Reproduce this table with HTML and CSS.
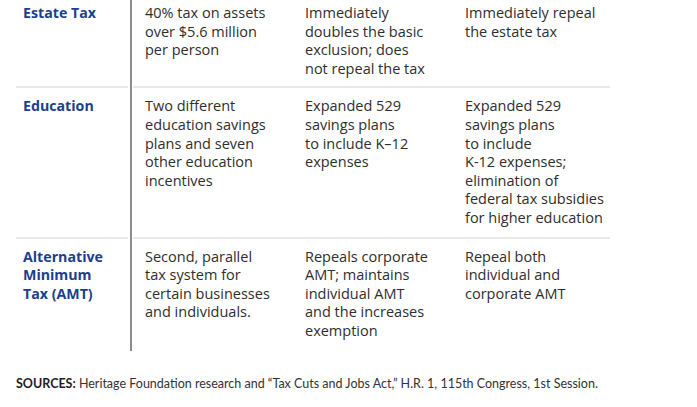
FILE: index.html
```html
<!DOCTYPE html>
<html>
<head>
<meta charset="utf-8">
<link rel="stylesheet" href="styles.css">
</head>
<body>
<div class="table">
  <div class="vline"></div>

  <div class="label r1">Estate Tax</div>
  <div class="cell c2 r1">40% tax on assets<br>over $5.6 million<br>per person</div>
  <div class="cell c3 r1">Immediately<br>doubles the basic<br>exclusion; does<br>not repeal the tax</div>
  <div class="cell c4 r1">Immediately repeal<br>the estate tax</div>

  <div class="sep-left s1"></div>
  <div class="sep-right s1"></div>

  <div class="label r2">Education</div>
  <div class="cell c2 r2">Two different<br>education savings<br>plans and seven<br>other education<br>incentives</div>
  <div class="cell c3 r2">Expanded 529<br>savings plans<br>to include K–12<br>expenses</div>
  <div class="cell c4 r2">Expanded 529<br>savings plans<br>to include<br>K-12 expenses;<br>elimination of<br>federal tax subsidies<br>for higher education</div>

  <div class="sep-left s2"></div>
  <div class="sep-right s2"></div>

  <div class="label r3">Alternative<br>Minimum<br>Tax (AMT)</div>
  <div class="cell c2 r3">Second, parallel<br>tax system for<br>certain businesses<br>and individuals.</div>
  <div class="cell c3 r3">Repeals corporate<br>AMT; maintains<br>individual AMT<br>and the increases<br>exemption</div>
  <div class="cell c4 r3">Repeal both<br>individual and<br>corporate AMT</div>
</div>
<p class="sources"><b>SOURCES:</b> Heritage Foundation research and “Tax Cuts and Jobs Act,” H.R. 1, 115th Congress, 1st Session.</p>
</body>
</html>
```

FILE: styles.css
```css
html, body {
  margin: 0;
  padding: 0;
  background: #ffffff;
}
body {
  font-family: "Open Sans", "Liberation Sans", sans-serif;
  color: #2e2e2e;
}
.table {
  display: grid;
  margin-left: 16px;
  width: 594px;
  grid-template-columns: 112px 2px 2px 1px 159px 160px 158px;
  grid-template-rows: auto 2px auto 2px auto;
  font-size: 14.5px;
  line-height: 18.6px;
  white-space: nowrap;
}
.vline {
  grid-column: 3;
  grid-row: 1 / -1;
  background: #8c8c8c;
}
.label {
  grid-column: 1;
  padding-left: 7px;
  font-size: 14.2px;
  font-weight: 700;
  color: #1b3f8e;
}
.cell { padding-left: 12px; }
.c2 { grid-column: 5; }
.c3 { grid-column: 6; padding-left: 13px; }
.c4 { grid-column: 7; padding-left: 13px; }
.r1 { grid-row: 1; padding-top: 4px; padding-bottom: 8px; }
.r2 { grid-row: 3; padding-top: 9px; padding-bottom: 9px; }
.r3 { grid-row: 5; padding-top: 9px; padding-bottom: 10px; }
.s1 { grid-row: 2; }
.s2 { grid-row: 4; }
.sep-left { grid-column: 1; background: #e9e9e9; }
.sep-right { grid-column: 5 / 8; background: #e9e9e9; }
.sources {
  margin: 25px 0 0 16px;
  font-family: Lato, "Liberation Sans", sans-serif;
  font-size: 12.5px;
  line-height: 16px;
  color: #333333;
}
.sources b { color: #1e1e1e; }
```
